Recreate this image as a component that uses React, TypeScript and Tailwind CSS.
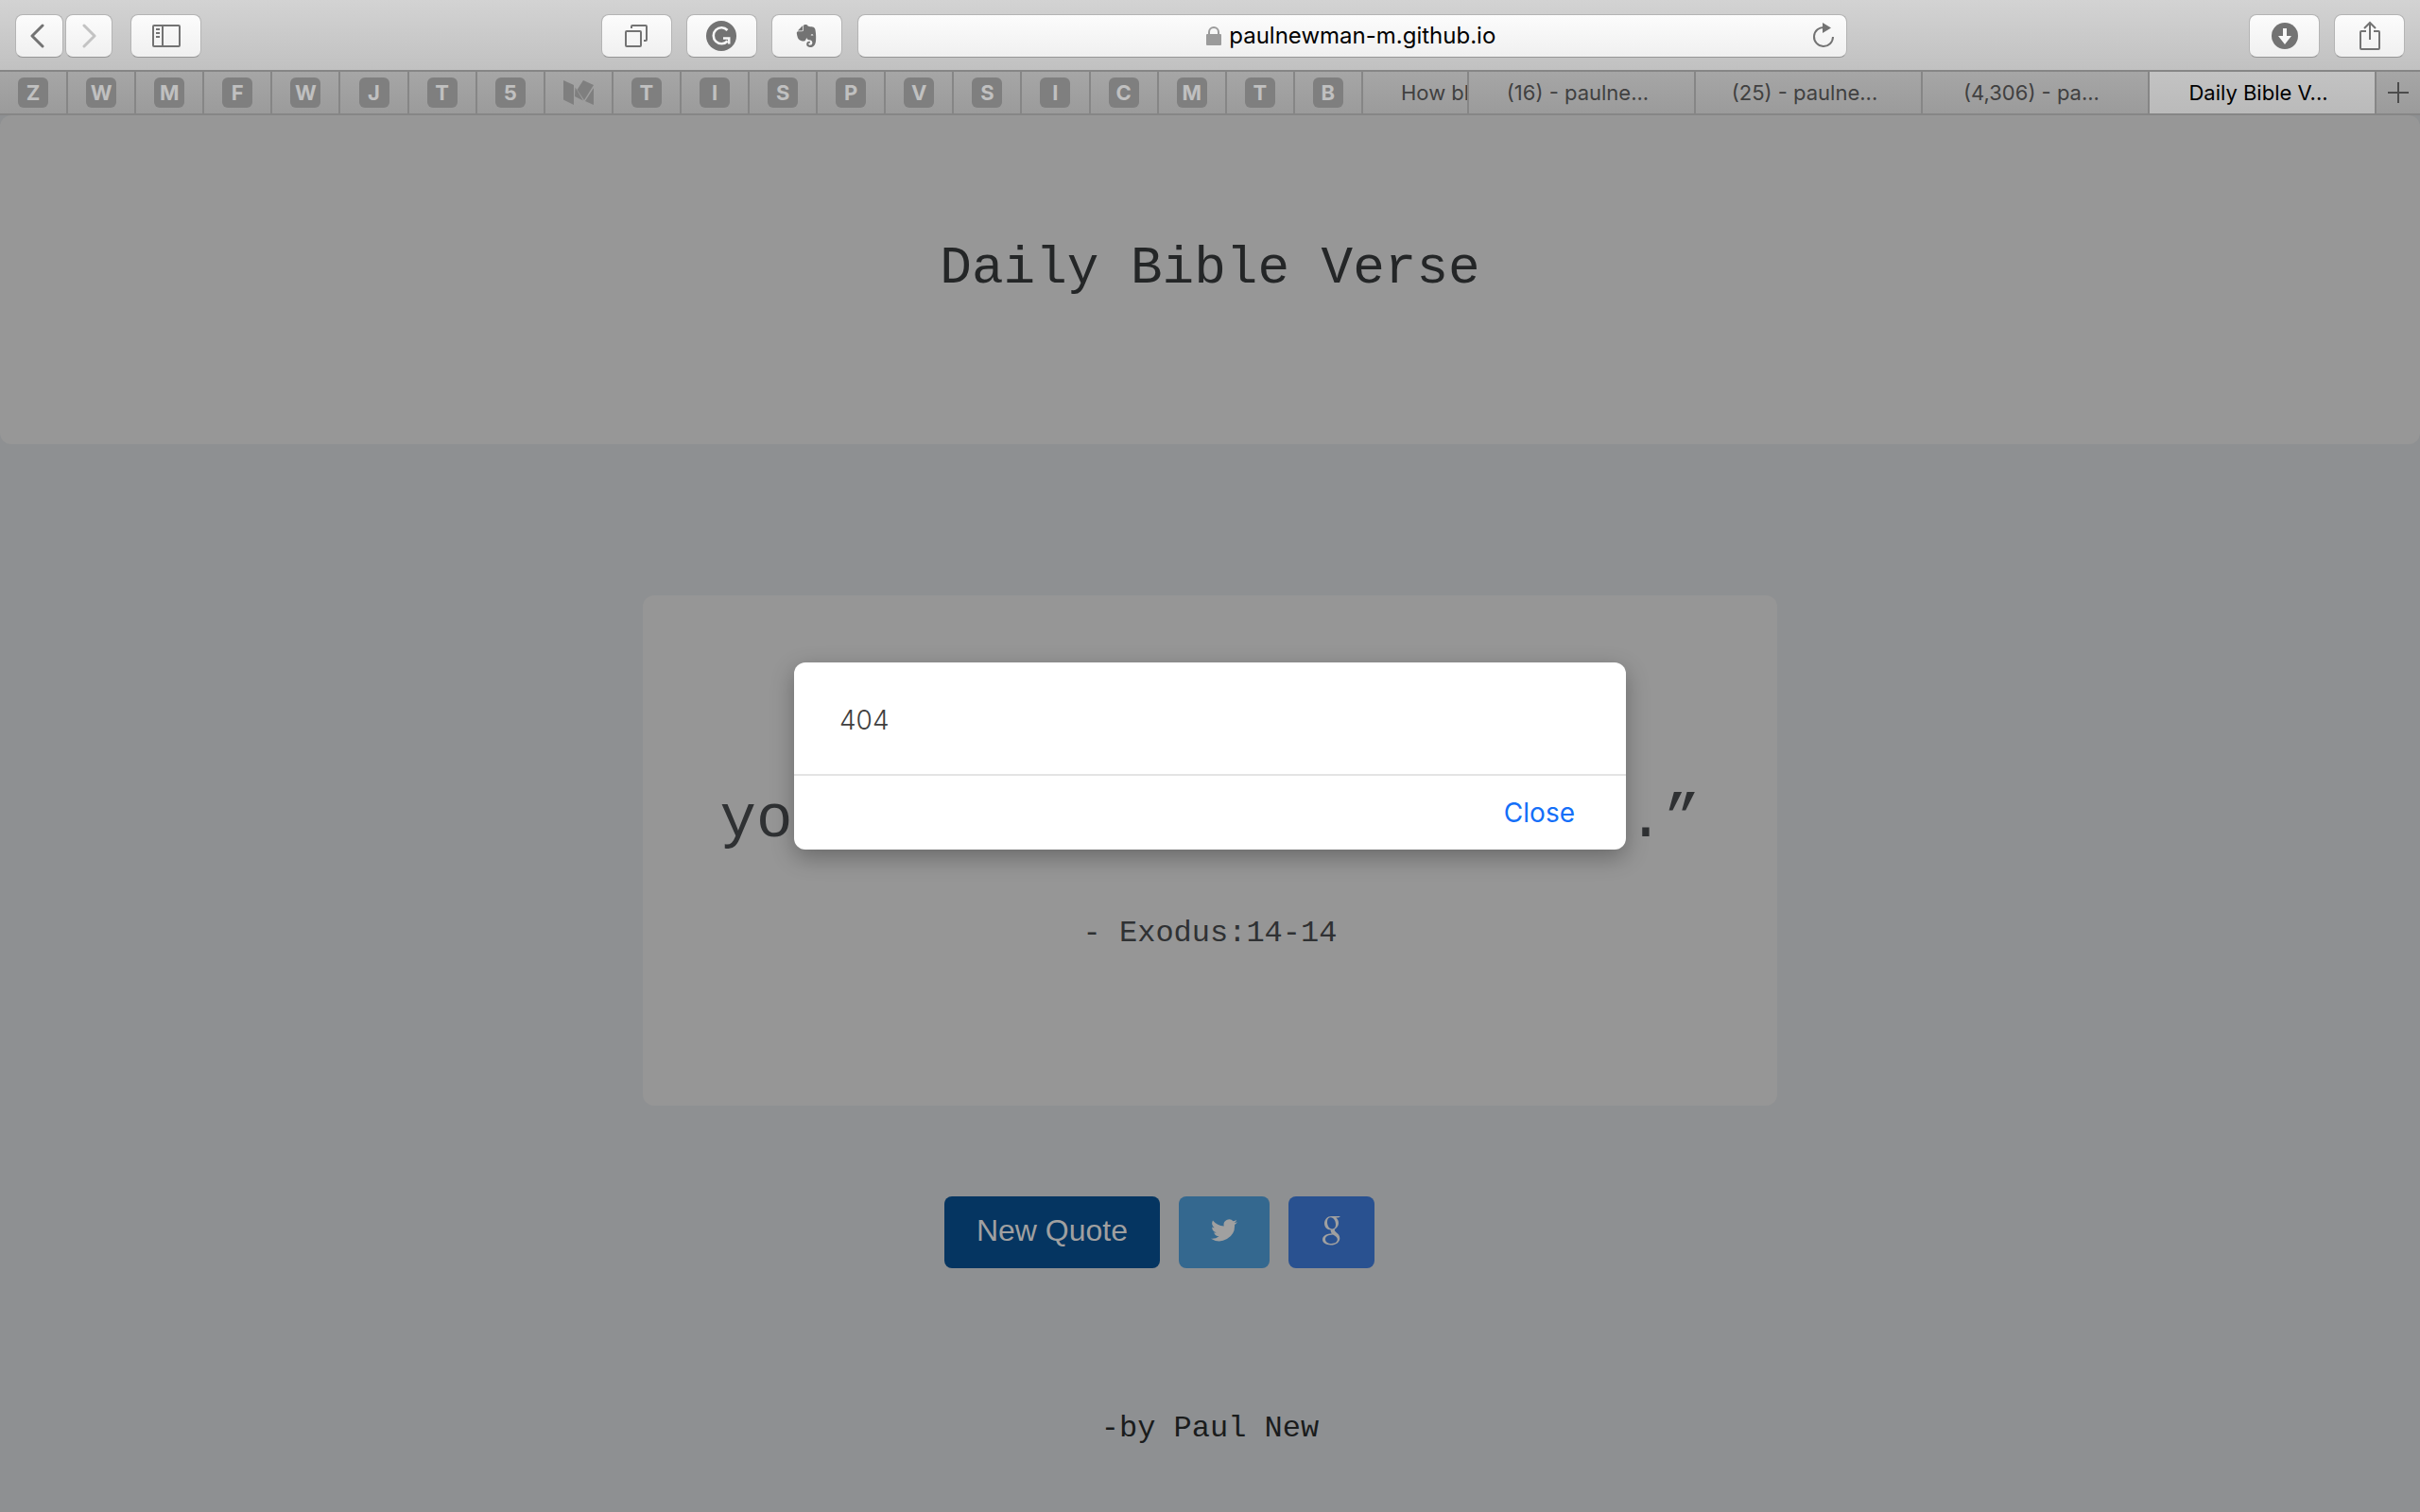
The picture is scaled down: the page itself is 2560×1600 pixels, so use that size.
import type { ReactNode } from "react";
import { SiEvernote } from "react-icons/si";

const pinned = ["Z","W","M","F","W","J","T","5","","T","I","S","P","V","S","I","C","M","T","B"];

const btn = "flex h-[46px] items-center justify-center rounded-lg border border-[#b4b4b4] border-b-[#969696] bg-linear-to-b from-[#fcfcfc] to-[#f0f0f0] text-[#737373]";

function ToolButton({ label, className = "w-[75px]", children }: { label: string; className?: string; children: ReactNode }) {
  return (
    <button type="button" aria-label={label} className={`${btn} ${className}`}>
      {children}
    </button>
  );
}

function Toolbar() {
  return (
    <header className="flex h-[76px] items-start border-b-2 border-[#868686] bg-linear-to-b from-[#d3d3d3] to-[#c1c1c1] px-4 pt-[15px]">
      <div className="flex flex-[21] items-center">
        <ToolButton label="Back" className="w-[51px] pr-1">
          <svg width="16" height="26" viewBox="0 0 16 26" fill="none" stroke="currentColor" strokeWidth="3" strokeLinecap="round" strokeLinejoin="round"><path d="M13 2 2 13l11 11" /></svg>
        </ToolButton>
        <ToolButton label="Forward" className="ml-0.5 w-[50px]">
          <svg className="text-[#c3c3c3]" width="16" height="26" viewBox="0 0 16 26" fill="none" stroke="currentColor" strokeWidth="3" strokeLinecap="round" strokeLinejoin="round"><path d="M3 2l11 11L3 24" /></svg>
        </ToolButton>
        <ToolButton label="Show sidebar" className="ml-[19px] w-[75px]">
          <svg width="30" height="24" viewBox="0 0 30 24" fill="none" stroke="currentColor" strokeWidth="2"><rect x="1" y="1" width="28" height="22" rx="1" /><path d="M11 1v22" /><path d="M4 5h4M4 9h4M4 13h4" /></svg>
        </ToolButton>
      </div>
      <div className="mr-4 flex gap-[15px]">
        <ToolButton label="Tab overview">
          <svg width="24" height="24" viewBox="0 0 24 24" fill="none" stroke="currentColor" strokeWidth="2"><rect x="1" y="7" width="16" height="16" rx="1" /><path d="M7 4V2a1 1 0 0 1 1-1h14a1 1 0 0 1 1 1v14a1 1 0 0 1-1 1h-2" /></svg>
        </ToolButton>
        <ToolButton label="Grammarly">
          <svg width="32" height="32" viewBox="0 0 32 32"><circle cx="16" cy="16" r="16" fill="currentColor" /><path d="M22.500 10A8.500 8.500 0 1 0 22.500 21.500M18 18.500h6.200v6" fill="none" stroke="#f6f6f6" strokeWidth="2.600" /></svg>
        </ToolButton>
        <ToolButton label="Evernote">
          <SiEvernote size={24} />
        </ToolButton>
      </div>
      <div className={`${btn} w-[41.4%] min-w-0 px-3`}>
        <div className="flex flex-1 items-center justify-center gap-2 pl-6">
          <svg width="16" height="20" viewBox="0 0 16 20" className="shrink-0 text-[#9b9b9b]"><rect y="8" width="16" height="12" rx="1" fill="currentColor" /><path d="M3 9V6a5 5 0 0 1 10 0v3" fill="none" stroke="currentColor" strokeWidth="2" /></svg>
          <input aria-label="Address" defaultValue="paulnewman-m.github.io" className="w-[284px] bg-transparent text-[24px] leading-8 text-black outline-none" />
        </div>
        <button type="button" aria-label="Reload">
          <svg width="24" height="28" viewBox="0 0 24 28"><path d="M13 5A10 10 0 1 0 22 15" fill="none" stroke="currentColor" strokeWidth="2" /><path d="M11 0l9 5.500-9 5.500z" fill="currentColor" /></svg>
        </button>
      </div>
      <div className="flex flex-[20] justify-end gap-[15px]">
        <ToolButton label="Downloads">
          <svg width="28" height="28" viewBox="0 0 28 28"><circle cx="14" cy="14" r="14" fill="currentColor" /><path d="M12 6h4v8h5l-7 9-7-9h5z" fill="#f8f8f8" /></svg>
        </ToolButton>
        <ToolButton label="Share">
          <svg width="24" height="32" viewBox="0 0 24 32" fill="none" stroke="currentColor" strokeWidth="2"><path d="M8 11H3a1 1 0 0 0-1 1v17a1 1 0 0 0 1 1h18a1 1 0 0 0 1-1V12a1 1 0 0 0-1-1h-5M12 20V2M6 8l6-6 6 6" /></svg>
        </ToolButton>
      </div>
    </header>
  );
}

function Tab({ title, active = false }: { title: string; active?: boolean }) {
  return (
    <button
      type="button"
      role="tab"
      aria-selected={active}
      className={
        active
          ? "flex-1 border-r-2 border-[#868686] bg-linear-to-b from-[#c3c3c3] to-[#bababa] pr-2 text-[22px] text-black"
          : "flex-1 border-r-2 border-[#868686] pr-2 text-[22px] text-[#404040]"
      }
    >
      {title}
    </button>
  );
}

function TabBar() {
  return (
    <nav role="tablist" aria-label="Open tabs" className="flex h-[46px] border-b-2 border-[#868686] bg-linear-to-b from-[#a6a6a6] to-[#9b9b9b]">
      <div className="flex w-[1442px] shrink-0">
        {pinned.map((letter, i) => (
          <button key={i} type="button" role="tab" aria-label={letter || "Medium"} className="flex flex-1 items-center justify-center border-r-2 border-[#868686]">
            {letter ? (
              <span className="flex size-8 items-center justify-center rounded-md bg-[#7f7f7f] text-[22px] leading-8 font-bold text-[#c0c0c0]">{letter}</span>
            ) : (
              <svg width="32" height="26" viewBox="0 0 32 26" fill="#7f7f7f"><path d="M0 0l11 5v21L0 20.500zM21 0l11 5-10 16-7.500-11zM12.500 7.500L21 21.500l-9-4.500zM32 8v18l-9-4z" /></svg>
            )}
          </button>
        ))}
      </div>
      <button type="button" role="tab" className="w-28 shrink-0 overflow-hidden border-r-2 border-[#868686] pl-10 text-left text-[22px] whitespace-nowrap text-[#404040]">
        How bl
      </button>
      <Tab title="(16) - paulne..." />
      <Tab title="(25) - paulne..." />
      <Tab title="(4,306) - pa..." />
      <Tab title="Daily Bible V..." active />
      <button type="button" aria-label="New tab" className="flex w-[46px] shrink-0 items-center justify-center text-[#4c4c4c]">
        <svg width="22" height="22" viewBox="0 0 22 22" stroke="currentColor" strokeWidth="2"><path d="M11 0v22M0 11h22" /></svg>
      </button>
    </nav>
  );
}

function Dialog() {
  return (
    <div role="alertdialog" aria-label="404" className="absolute top-[579px] left-1/2 w-[880px] -translate-x-1/2 rounded-xl bg-white font-['Inter',sans-serif] shadow-[0_8px_24px_rgba(0,0,0,0.3)]">
      <p className="border-b-2 border-[#e4e4e4] px-12 pt-10 pb-9 text-[28px] leading-[42px] font-light text-[#404040]">404</p>
      <div className="flex justify-end px-[54px] py-[18px]">
        <button type="button" className="text-[28px] leading-[42px] text-[#146ff8]">Close</button>
      </div>
    </div>
  );
}

export default function App() {
  return (
    <div className="flex min-h-screen flex-col bg-[#8e9092] font-['Inter',sans-serif]">
      <Toolbar />
      <TabBar />
      <main className="relative flex flex-1 flex-col items-center font-['Liberation_Mono',monospace]">
        <section className="w-full rounded-xl bg-[#979797] pt-[130px] pb-[154px] text-center">
          <h1 className="text-[56px] leading-[64px] text-[#242627]">Daily Bible Verse</h1>
        </section>
        <section className="mt-40 w-[1200px] rounded-xl bg-[#969696] pt-[202px] pb-[162px] text-center text-[#2f3133]">
          <h2 className="text-[64px] leading-[72px]">you need only to be still.”</h2>
          <p className="mt-16 text-[32px] leading-10">- Exodus:14-14</p>
        </section>
        <div className="mt-24 flex w-[562px] gap-5 font-['Liberation_Sans',sans-serif]">
          <button type="button" className="h-[76px] w-[228px] rounded-lg bg-[#053561] pb-1 text-[32px] text-[#a0a0a0]">New Quote</button>
          <a href="#twitter" aria-label="Share on Twitter" className="flex h-[76px] w-24 items-center justify-center rounded-lg bg-[#34688f] pb-1 text-[#a0a0a0]">
            <svg width="28" height="24" viewBox="0 0 24 20" fill="currentColor"><path d="M24 2.400a10 10 0 0 1-2.800.8A5 5 0 0 0 23.300.5a10 10 0 0 1-3.100 1.200 4.900 4.900 0 0 0-8.400 4.500A14 14 0 0 1 1.700 1a4.900 4.900 0 0 0 1.500 6.600A5 5 0 0 1 1 7v.1a4.900 4.900 0 0 0 3.900 4.800 5 5 0 0 1-2.200.1 4.900 4.900 0 0 0 4.600 3.400A9.900 9.900 0 0 1 0 17.500 14 14 0 0 0 21.500 5V4.900A10 10 0 0 0 24 2.400z" /></svg>
          </a>
          <a href="#google" aria-label="Share on Google" className="flex h-[76px] w-[91px] items-center justify-center rounded-lg bg-[#295190] pb-1 text-[#a0a0a0]">
            <svg width="20" height="31" viewBox="0 0 20 31" fill="currentColor" fillRule="evenodd">
              <path d="M9.500 0H19l-2 1.600h-2.600C16 3 17 4.800 17 7.200c0 2.600-1.300 4.300-2.700 5.500-1.100.9-1.500 1.400-1.500 2.100 0 .8.700 1.400 1.600 2.100 2 1.500 3.900 3.100 3.900 6.300 0 4-3.600 7.300-9.600 7.300C3.500 30.500 0 28 0 24.800c0-4.300 4.500-6.300 10-6.600-.8-.9-1.300-1.700-1.300-2.800v-.9C4.800 14.500 2 11.500 2 7.800 2 3.500 5.200 0 9.500 0zM8.700 1.300C6.400 1.300 5 3.200 5 5.900c0 3.800 2 7.500 5.300 7.500 2.400 0 3.700-1.700 3.700-4.600 0-3.600-2-7.500-5.300-7.500zM11 19.400c-4.500.2-8 1.600-8 4.800 0 3 2.700 4.800 6.600 4.800 3.800 0 6.200-1.700 6.200-4.400 0-2.200-1.400-3.300-4.800-5.200z" />
            </svg>
          </a>
        </div>
        <footer className="mt-[150px] text-[32px] leading-10 text-[#1a1c1c]">-by Paul New</footer>
        <Dialog />
      </main>
    </div>
  );
}
